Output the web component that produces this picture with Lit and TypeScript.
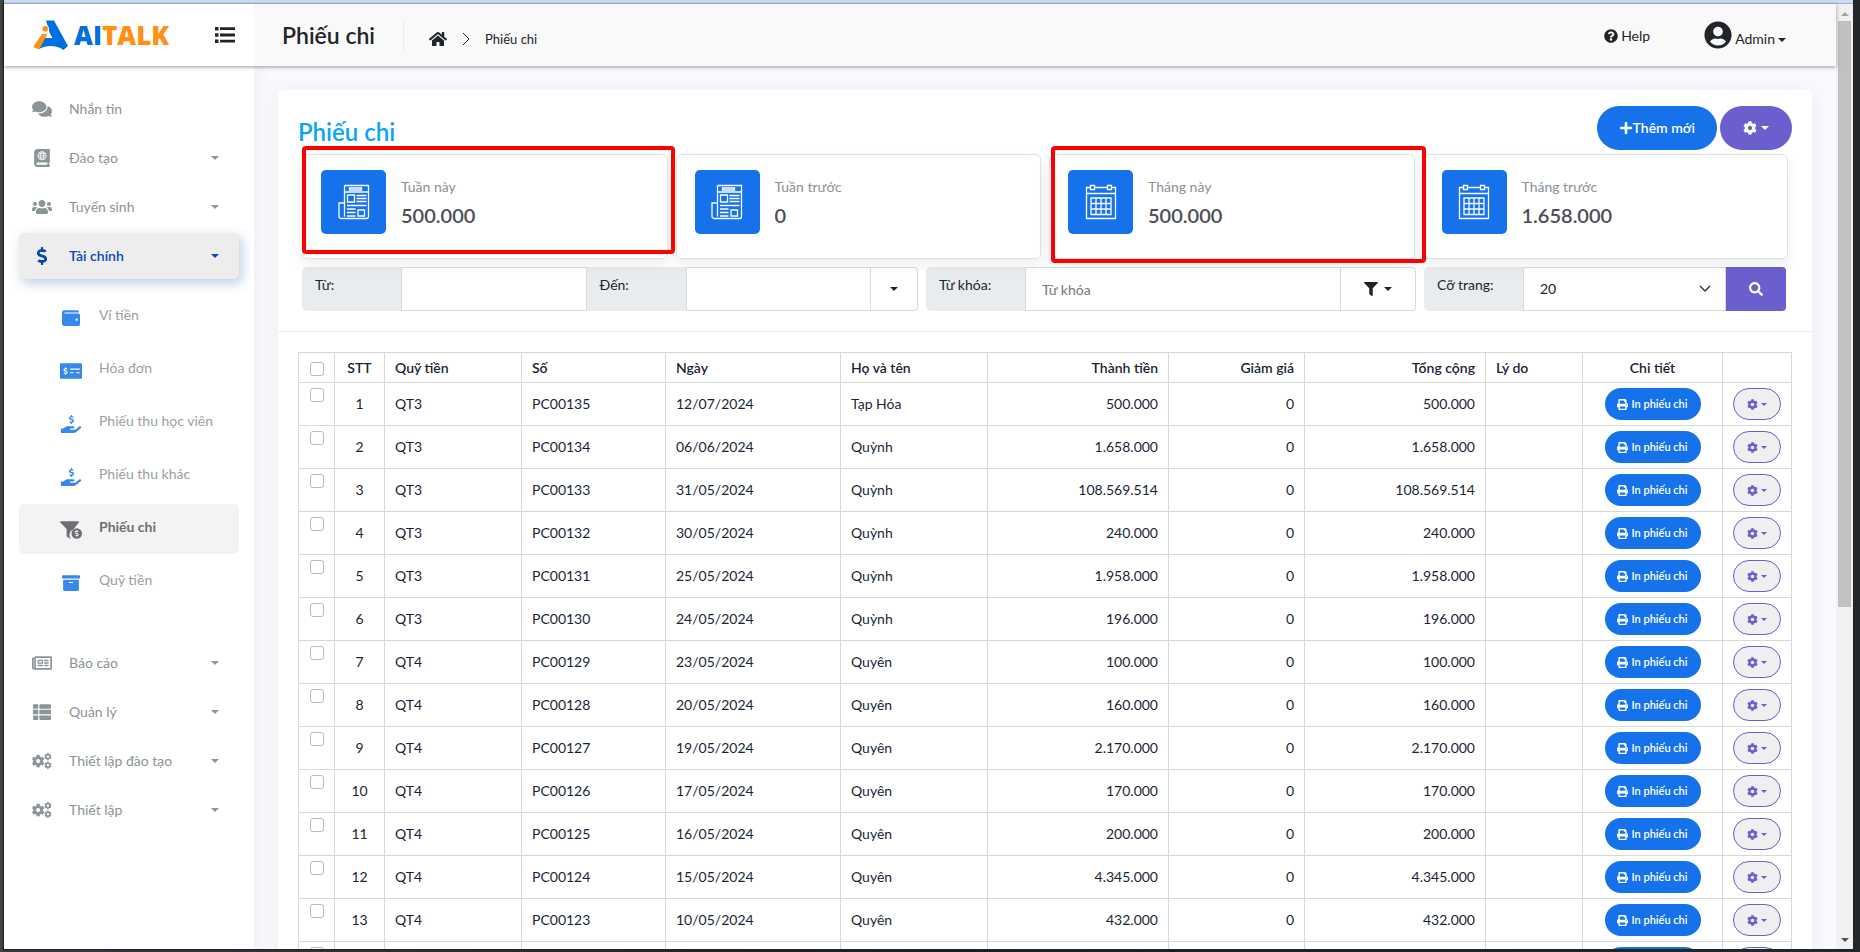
import { LitElement, html, css, svg, nothing } from "lit";
import { customElement, property, state } from "lit/decorators.js";
import { classMap } from "lit/directives/class-map.js";

const DOLLAR =
  "M209.2 233.4l-108-31.6C88.7 198.2 80 186.5 80 173.5c0-16.3 13.2-29.5 29.5-29.5h66.3c12.2 0 24.2 3.7 34.2 10.5 6.1 4.1 14.3 3.1 19.5-2l34.8-34c7.1-6.9 6.1-18.4-1.8-24.5C238 74.8 207.4 64.1 176 64V16c0-8.8-7.2-16-16-16h-32c-8.8 0-16 7.2-16 16v48h-2.5C45.8 64-5.4 118.7.5 183.6c4.2 46.1 39.4 83.6 83.8 96.6l102.5 30c12.5 3.7 21.2 15.3 21.2 28.3 0 16.3-13.2 29.5-29.5 29.5h-66.3C100 368 88 364.3 78 357.5c-6.1-4.1-14.3-3.1-19.5 2l-34.8 34c-7.1 6.9-6.1 18.4 1.8 24.5 24.5 19.2 55.1 29.9 86.5 30v48c0 8.8 7.2 16 16 16h32c8.8 0 16-7.2 16-16v-48.2c46.6-.9 90.3-28.6 105.7-72.7 21.5-61.6-14.6-124.8-72.5-141.7z";
const COG =
  "M487.4 315.7l-42.6-24.6c4.3-23.2 4.3-47 0-70.2l42.6-24.6c4.9-2.8 7.1-8.6 5.5-14-11.1-35.6-30-67.8-54.7-94.6-3.8-4.1-10-5.1-14.8-2.3L380.8 110c-17.9-15.4-38.5-27.3-60.8-35.1V25.8c0-5.6-3.9-10.5-9.4-11.7-36.7-8.2-74.3-7.8-109.2 0-5.5 1.2-9.4 6.1-9.4 11.7V75c-22.2 7.9-42.8 19.8-60.8 35.1L88.7 85.5c-4.9-2.8-11-1.9-14.8 2.3-24.7 26.7-43.6 58.9-54.7 94.6-1.7 5.4.6 11.2 5.5 14L67.3 221c-4.3 23.2-4.3 47 0 70.2l-42.6 24.6c-4.9 2.8-7.1 8.6-5.5 14 11.1 35.6 30 67.8 54.7 94.6 3.8 4.1 10 5.1 14.8 2.3l42.6-24.6c17.9 15.4 38.5 27.3 60.8 35.1v49.2c0 5.6 3.9 10.5 9.4 11.7 36.7 8.2 74.3 7.8 109.2 0 5.5-1.2 9.4-6.1 9.4-11.7v-49.2c22.2-7.9 42.8-19.8 60.8-35.1l42.6 24.6c4.9 2.8 11 1.9 14.8-2.3 24.7-26.7 43.6-58.9 54.7-94.6 1.5-5.5-.7-11.3-5.6-14.1zM256 336c-44.1 0-80-35.9-80-80s35.9-80 80-80 80 35.9 80 80-35.9 80-80 80z";

const ICONS: Record<string, { box: string; body: unknown }> = {
  comments: {
    box: "0 0 576 512",
    body: svg`<path d="M416 192c0-88.4-93.1-160-208-160S0 103.6 0 192c0 34.3 14.1 65.9 38 92-13.4 30.2-35.5 54.2-35.8 54.5-2.2 2.3-2.8 5.7-1.5 8.7S4.8 352 8 352c36.6 0 66.9-12.3 88.7-25 32.2 15.7 70.3 25 111.3 25 114.9 0 208-71.6 208-160zm122 220c23.9-26 38-57.7 38-92 0-66.9-53.5-124.2-129.3-148.1.9 6.6 1.3 13.3 1.3 20.1 0 105.9-107.7 192-240 192-10.8 0-21.3-.8-31.7-1.9C207.8 439.6 281.8 480 368 480c41 0 79.1-9.2 111.3-25 21.8 12.7 52.1 25 88.7 25 3.2 0 6.1-1.9 7.3-4.8 1.3-2.9.7-6.3-1.5-8.7-.3-.3-22.4-24.2-35.8-54.5z"/>`,
  },
  atlas: {
    box: "0 0 448 512",
    body: svg`<path fill-rule="evenodd" d="M96 0h320c17.700 0 32 14 32 32v320c0 12-7 22-16 28-4 15-4 53 0 68 10 4 16 14 16 26 0 22-14 38-32 38H96c-53 0-96-43-96-96V96C0 43 43 0 96 0zm0 384c-42 0-42 64 0 64h280v-64z"/><g fill="none" stroke="#fff" stroke-width="22"><circle cx="226" cy="192" r="114"/><ellipse cx="226" cy="192" rx="50" ry="114"/><path d="M112 192h228M130 130h192M130 254h192"/></g>`,
  },
  users: {
    box: "0 0 640 512",
    body: svg`<path d="M96 224c35.3 0 64-28.7 64-64s-28.7-64-64-64-64 28.7-64 64 28.7 64 64 64zm448 0c35.3 0 64-28.7 64-64s-28.700-64-64-64-64 28.700-64 64 28.700 64 64 64zm32 32h-64c-17.600 0-33.500 7.100-45.100 18.600 40.300 22.100 68.900 62 75.100 109.400h66c17.700 0 32-14.300 32-32v-32c0-35.300-28.700-64-64-64zm-256 0c61.900 0 112-50.100 112-112S381.900 32 320 32 208 82.100 208 144s50.100 112 112 112zm76.800 32h-8.300c-20.800 10-43.900 16-68.500 16s-47.600-6-68.500-16h-8.300C179.600 288 128 339.600 128 403.200V432c0 26.500 21.500 48 48 48h288c26.500 0 48-21.500 48-48v-28.800c0-63.600-51.600-115.200-115.200-115.200zm-223.700-13.400C161.500 263.100 145.600 256 128 256H64c-35.300 0-64 28.700-64 64v32c0 17.700 14.300 32 32 32h65.900c6.300-47.400 34.900-87.300 75.200-109.400z"/>`,
  },
  dollar: { box: "0 0 288 512", body: svg`<path d=${DOLLAR} />` },
  news: {
    box: "0 0 576 512",
    body: svg`<path d="M552 64H112c-20.858 0-38.643 13.377-45.248 32H24c-13.255 0-24 10.745-24 24v272c0 30.928 25.072 56 56 56h496c13.255 0 24-10.745 24-24V88c0-13.255-10.745-24-24-24zM48 392V144h16v248c0 4.411-3.589 8-8 8s-8-3.589-8-8zm480 8H111.422c.374-2.614.578-5.283.578-8V112h416v288zM172 280h136c6.627 0 12-5.373 12-12v-96c0-6.627-5.373-12-12-12H172c-6.627 0-12 5.373-12 12v96c0 6.627 5.373 12 12 12zm28-80h80v40h-80v-40zm-40 140v-24c0-6.627 5.373-12 12-12h136c6.627 0 12 5.373 12 12v24c0 6.627-5.373 12-12 12H172c-6.627 0-12-5.373-12-12zm192 0v-24c0-6.627 5.373-12 12-12h104c6.627 0 12 5.373 12 12v24c0 6.627-5.373 12-12 12H364c-6.627 0-12-5.373-12-12zm0-144v-24c0-6.627 5.373-12 12-12h104c6.627 0 12 5.373 12 12v24c0 6.627-5.373 12-12 12H364c-6.627 0-12-5.373-12-12zm0 72v-24c0-6.627 5.373-12 12-12h104c6.627 0 12 5.373 12 12v24c0 6.627-5.373 12-12 12H364c-6.627 0-12-5.373-12-12z"/>`,
  },
  list: {
    box: "0 0 512 512",
    body: svg`<rect x="0" y="32" width="149" height="128" rx="24"/><rect x="181" y="32" width="331" height="128" rx="24"/><rect x="0" y="192" width="149" height="128" rx="24"/><rect x="181" y="192" width="331" height="128" rx="24"/><rect x="0" y="352" width="149" height="128" rx="24"/><rect x="181" y="352" width="331" height="128" rx="24"/>`,
  },
  cogs: {
    box: "0 0 640 512",
    body: svg`<path transform="translate(-14 50) scale(.82)" d=${COG} /><path transform="translate(388 -2) scale(.47)" d=${COG} /><path transform="translate(388 272) scale(.47)" d=${COG} />`,
  },
  cog: { box: "0 0 512 512", body: svg`<path d=${COG} />` },
  wallet: {
    box: "0 0 512 512",
    body: svg`<path d="M461.2 128H80c-8.840 0-16-7.160-16-16s7.160-16 16-16h384c8.840 0 16-7.160 16-16 0-26.510-21.490-48-48-48H64C28.650 32 0 60.650 0 96v320c0 35.350 28.650 64 64 64h397.200c28.020 0 50.800-21.530 50.800-48V176c0-26.470-22.780-48-50.800-48zM416 336c-17.670 0-32-14.330-32-32s14.330-32 32-32 32 14.330 32 32-14.330 32-32 32z"/>`,
  },
  check: {
    box: "0 0 640 512",
    body: svg`<rect x="0" y="32" width="640" height="448" rx="24"/><g fill="#fff"><path transform="translate(102 150) scale(.42)" d=${DOLLAR} /><rect x="290" y="186" width="290" height="32" rx="12"/><rect x="290" y="290" width="110" height="32" rx="12"/><rect x="470" y="290" width="110" height="32" rx="12"/></g>`,
  },
  hand: {
    box: "0 0 576 512",
    body: svg`<path d="M565.3 328.100c-11.800-10.700-30.200-10-42.600 0L430.300 402c-11.300 9.100-25.400 14-40 14H272c-8.800 0-16-7.200-16-16s7.200-16 16-16h78.300c15.900 0 30.700-10.900 33.300-26.600 3.300-20-12.100-37.400-31.600-37.400H192c-27 0-53.100 9.300-74.100 26.300L71.400 384H16c-8.800 0-16 7.200-16 16v96c0 8.800 7.200 16 16 16h356.800c14.500 0 28.600-4.900 40-14L564 377c15.200-12.100 16.400-35.300 1.300-48.900z"/><path transform="translate(230 0) scale(.5)" d=${DOLLAR} />`,
  },
  funnel: {
    box: "0 0 640 512",
    body: svg`<path d="M528 0H24C3 0-8 26 7 41l185 185v206c0 8 4 15 10 20l98 58c6 2 12 2 17 0-30-36-46-80-40-130 6-70 50-120 110-138L545 41c15-15 4-41-17-41z"/><circle cx="488" cy="356" r="152"/><path fill="#f3f3f3" transform="translate(432 256) scale(.39)" d=${DOLLAR} />`,
  },
  archive: {
    box: "0 0 512 512",
    body: svg`<path d="M32 448c0 17.700 14.300 32 32 32h384c17.700 0 32-14.300 32-32V160H32v288zm160-212c0-6.600 5.400-12 12-12h104c6.600 0 12 5.400 12 12v8c0 6.600-5.400 12-12 12H204c-6.600 0-12-5.400-12-12v-8zM480 32H32C14.300 32 0 46.300 0 64v48c0 8.800 7.200 16 16 16h480c8.800 0 16-7.200 16-16V64c0-17.700-14.300-32-32-32z"/>`,
  },
  home: {
    box: "0 0 576 512",
    body: svg`<path d="M280.370 148.260L96 300.110V464a16 16 0 0 0 16 16l112.060-.290a16 16 0 0 0 15.920-16V368a16 16 0 0 1 16-16h64a16 16 0 0 1 16 16v95.640a16 16 0 0 0 16 16.050L464 480a16 16 0 0 0 16-16V300L295.670 148.260a12.190 12.190 0 0 0-15.300 0zM571.600 251.470L488 182.560V44.050a12 12 0 0 0-12-12h-56a12 12 0 0 0-12 12v72.610L318.470 43a48 48 0 0 0-61 0L4.340 251.470a12 12 0 0 0-1.600 16.900l25.500 31A12 12 0 0 0 45.150 301l235.220-193.740a12.190 12.190 0 0 1 15.300 0L530.900 301a12 12 0 0 0 16.900-1.600l25.500-31a12 12 0 0 0-1.700-16.930z"/>`,
  },
  help: {
    box: "0 0 512 512",
    body: svg`<path d="M504 256c0 136.997-111.043 248-248 248S8 392.997 8 256C8 119.083 119.043 8 256 8s248 111.083 248 248zM262.655 90c-54.497 0-89.255 22.957-116.549 63.758-3.536 5.286-2.353 12.415 2.715 16.258l34.699 26.310c5.205 3.947 12.621 3.008 16.665-2.122 17.864-22.658 30.113-35.797 57.303-35.797 20.429 0 45.698 13.148 45.698 32.958 0 14.976-12.363 22.667-32.534 33.976C247.128 238.528 216 254.941 216 296v4c0 6.627 5.373 12 12 12h56c6.627 0 12-5.373 12-12v-1.333c0-28.462 83.186-29.647 83.186-106.667 0-58.002-60.165-102-116.531-102zM256 338c-25.365 0-46 20.635-46 46 0 25.364 20.635 46 46 46s46-20.636 46-46c0-25.365-20.635-46-46-46z"/>`,
  },
  user: {
    box: "0 0 496 512",
    body: svg`<path d="M248 8C111 8 0 119 0 256s111 248 248 248 248-111 248-248S385 8 248 8zm0 96c48.600 0 88 39.400 88 88s-39.400 88-88 88-88-39.400-88-88 39.400-88 88-88zm0 344c-58.700 0-111.300-26.600-146.500-68.200 18.800-35.400 55.600-59.800 98.500-59.800 2.400 0 4.800.4 7.100 1.100 13 4.200 26.600 6.900 40.900 6.900 14.300 0 28-2.700 40.900-6.900 2.300-.7 4.700-1.100 7.100-1.100 42.900 0 79.700 24.400 98.500 59.800C359.300 421.400 306.700 448 248 448z"/>`,
  },
  plus: {
    box: "0 0 448 512",
    body: svg`<path d="M416 208H272V64c0-17.670-14.330-32-32-32h-32c-17.670 0-32 14.330-32 32v144H32c-17.670 0-32 14.330-32 32v32c0 17.670 14.330 32 32 32h144v144c0 17.670 14.330 32 32 32h32c17.670 0 32-14.330 32-32V304h144c17.670 0 32-14.330 32-32v-32c0-17.670-14.330-32-32-32z"/>`,
  },
  filter: {
    box: "0 0 512 512",
    body: svg`<path d="M487.976 0H24.028C2.710 0-8.047 25.866 7.058 40.971L192 225.941V432c0 7.831 3.821 15.170 10.237 19.662l80 55.980C298.020 518.690 320 507.493 320 487.980V225.941l184.947-184.970C520.021 25.896 509.338 0 487.976 0z"/>`,
  },
  search: {
    box: "0 0 512 512",
    body: svg`<path d="M505 442.700L405.300 343c-4.500-4.500-10.600-7-17-7H372c27.600-35.300 44-79.700 44-128C416 93.100 322.900 0 208 0S0 93.100 0 208s93.100 208 208 208c48.300 0 92.700-16.400 128-44v16.300c0 6.400 2.500 12.500 7 17l99.700 99.700c9.400 9.400 24.600 9.400 33.900 0l28.300-28.300c9.400-9.400 9.400-24.600.1-34zM208 336c-70.700 0-128-57.200-128-128 0-70.700 57.200-128 128-128 70.700 0 128 57.200 128 128 0 70.700-57.200 128-128 128z"/>`,
  },
  print: {
    box: "0 0 512 512",
    body: svg`<path d="M448 192V77.250c0-8.490-3.370-16.620-9.370-22.630L393.370 9.370c-6-6-14.140-9.370-22.630-9.370H96C78.330 0 64 14.330 64 32v160c-35.350 0-64 28.650-64 64v112c0 8.840 7.160 16 16 16h48v96c0 17.670 14.330 32 32 32h320c17.670 0 32-14.330 32-32v-96h48c8.840 0 16-7.160 16-16V256c0-35.350-28.650-64-64-64zm-64 256H128v-96h256v96zm0-224H128V64h192v48c0 8.840 7.160 16 16 16h48v96zm48 72c-13.250 0-24-10.750-24-24 0-13.260 10.750-24 24-24s24 10.740 24 24c0 13.250-10.750 24-24 24z"/>`,
  },
  menu: {
    box: "0 0 20 18",
    body: svg`<path d="M0 1h3.500v3.500H0zM0 7.200h3.500v3.500H0zM0 13.400h3.500v3.500H0zM5 1.200h15v2.800H5zM5 7.600h15v2.800H5zM5 13.800h15v2.800H5z"/>`,
  },
  chevron: {
    box: "0 0 8 14",
    body: svg`<path fill="none" stroke="currentColor" d="M1 1l6 6-6 6"/>`,
  },
  paper: {
    box: "0 0 32 36",
    body: svg`<g fill="none" stroke="currentColor" stroke-width="1.300"><path d="M6.500 1.500h24v31a2 2 0 0 1-2 2H3a2 2 0 0 1-2-2V19h5.500v13.500M6.500 1.500V19M6.500 8h24M11.500 4h12v2h-12zM9.500 11h7v7h-7zM20 26h6.500v6H20zM18.500 11.500h10M18.500 14.500h10M18.500 17.500h10M9 21.500h19.500M9 25h8.500M9 28.500h8.500M9 32h8.500"/></g>`,
  },
  calendar: {
    box: "0 0 32 36",
    body: svg`<g fill="none" stroke="currentColor" stroke-width="1.300"><path d="M5.500 3.500h-4v31h29v-31h-4M9.500 3.500h13M1.500 9.500h29M5.500 1.500h4v4h-4zM22.500 1.500h4v4h-4zM6 14h20v16.500H6zM6 19.500h20M6 25h20M11 14v16.500M16 14v16.500M21 14v16.500"/></g>`,
  },
};

@customElement("ui-icon")
class UiIcon extends LitElement {
  @property() name = "";
  static styles = css`
    :host {
      display: inline-flex;
      flex: none;
    }
    svg {
      width: 100%;
      height: 100%;
      fill: currentColor;
    }
  `;
  render() {
    const icon = ICONS[this.name];
    return icon
      ? html`<svg viewBox=${icon.box} aria-hidden="true">${icon.body}</svg>`
      : nothing;
  }
}

const ROWS: string[][] = [
  ["QT3", "PC00135", "12/07/2024", "Tạp Hóa", "500.000"],
  ["QT3", "PC00134", "06/06/2024", "Quỳnh", "1.658.000"],
  ["QT3", "PC00133", "31/05/2024", "Quỳnh", "108.569.514"],
  ["QT3", "PC00132", "30/05/2024", "Quỳnh", "240.000"],
  ["QT3", "PC00131", "25/05/2024", "Quỳnh", "1.958.000"],
  ["QT3", "PC00130", "24/05/2024", "Quỳnh", "196.000"],
  ["QT4", "PC00129", "23/05/2024", "Quyên", "100.000"],
  ["QT4", "PC00128", "20/05/2024", "Quyên", "160.000"],
  ["QT4", "PC00127", "19/05/2024", "Quyên", "2.170.000"],
  ["QT4", "PC00126", "17/05/2024", "Quyên", "170.000"],
  ["QT4", "PC00125", "16/05/2024", "Quyên", "200.000"],
  ["QT4", "PC00124", "15/05/2024", "Quyên", "4.345.000"],
  ["QT4", "PC00123", "10/05/2024", "Quyên", "432.000"],
  ["", "", "", "", ""],
];

const COLUMNS: { label: string; width: number; align: string }[] = [
  { label: "Quỹ tiền", width: 137, align: "left" },
  { label: "Số", width: 144, align: "left" },
  { label: "Ngày", width: 175, align: "left" },
  { label: "Họ và tên", width: 147, align: "left" },
  { label: "Thành tiền", width: 181, align: "right" },
  { label: "Giảm giá", width: 136, align: "right" },
  { label: "Tổng cộng", width: 181, align: "right" },
  { label: "Lý do", width: 97, align: "left" },
  { label: "Chi tiết", width: 140, align: "center" },
  { label: "", width: 69, align: "center" },
];

@customElement("app-root")
class AppRoot extends LitElement {
  @state() private openGroup = "Tài chính";

  static styles = css`
    :host {
      display: block;
      font-family: Lato, "Noto Sans", sans-serif;
      font-size: 14px;
      line-height: 20px;
      color: #212529;
    }
    * {
      box-sizing: border-box;
    }
    a {
      color: inherit;
      text-decoration: none;
    }
    button,
    input,
    select {
      font: inherit;
      color: inherit;
      margin: 0;
    }
    button {
      cursor: pointer;
    }
    h1,
    h2,
    p {
      margin: 0;
    }
    .desktop {
      height: 100vh;
      padding: 0 7px 3px 4px;
      background: linear-gradient(90deg, #4a4743, #3a3a3c 4px, #1b1e20 50%, #24282a);
      overflow: hidden;
    }
    .window {
      height: 100%;
      display: flex;
      border-top: 3px solid #c9dbf6;
      box-shadow: 0 0 0 1px #222;
    }
    .page {
      flex: 1;
      min-width: 0;
      display: grid;
      grid-template: 62px minmax(0, 1fr) / 250px minmax(0, 1fr);
      border-top: 1px solid #9fb3d1;
      background: #f9fafd;
    }
    .caret {
      flex: none;
      border: 4px solid transparent;
      border-top-color: currentColor;
      border-bottom: 0;
    }

    .topbar {
      grid-column: 1 / 3;
      display: flex;
      background: #f9f9f9;
      box-shadow: 0 1px 4px rgba(0, 0, 0, 0.4);
      z-index: 2;
    }
    .brand {
      width: 250px;
      display: flex;
      align-items: center;
      justify-content: space-between;
      padding: 0 19px 0 28px;
      background: #fff;
    }
    .logo {
      display: flex;
      align-items: center;
      gap: 6px;
      font: 800 26px/32px "Open Sans", sans-serif;
      color: #0070e0;
    }
    .logo svg {
      width: 36px;
      height: 30px;
    }
    .logo .warm {
      color: #ff9012;
    }
    .toggle {
      display: flex;
      padding: 0;
      border: 0;
      background: none;
    }
    .toggle ui-icon {
      width: 20px;
      height: 18px;
    }
    .heading {
      flex: 1;
      display: flex;
      align-items: center;
      padding: 0 50px 0 28px;
    }
    .heading h1 {
      font-size: 23px;
      line-height: 32px;
      font-weight: 600;
      padding: 0 28px 0 0;
      border-right: 1px solid #ececec;
    }
    .crumbs {
      display: flex;
      align-items: center;
      gap: 15px;
      padding: 8px 0 0 25px;
      font-size: 13px;
    }
    .crumbs a {
      display: flex;
    }
    .crumbs ui-icon {
      width: 18px;
      height: 16px;
    }
    .crumbs ui-icon.sep {
      width: 8px;
      height: 14px;
    }
    .account {
      margin-left: auto;
      display: flex;
      align-items: center;
      gap: 54px;
    }
    .account a,
    .account button {
      display: flex;
      align-items: center;
      gap: 3px;
      padding: 0;
      border: 0;
      background: none;
    }
    .account a {
      padding-top: 2px;
    }
    .account a ui-icon {
      width: 14px;
      height: 14px;
    }
    .account button {
      align-items: flex-end;
    }
    .account button ui-icon {
      width: 28px;
      height: 28px;
    }
    .account .caret {
      margin: 0 0 7px;
    }

    .sidebar {
      padding: 20px 15px;
      background: #fff;
      box-shadow: 2px 0 16px rgba(40, 60, 120, 0.07);
      z-index: 1;
      color: #8b9497;
      overflow: hidden;
    }
    .sidebar ul {
      list-style: none;
      margin: 0;
      padding: 0;
      display: grid;
      gap: 3px;
    }
    .group {
      width: 100%;
      height: 46px;
      display: grid;
      grid-template-columns: 20px 1fr 8px;
      align-items: center;
      gap: 17px;
      padding: 0 20px 0 13px;
      border: 0;
      border-radius: 5px;
      background: none;
      text-align: left;
    }
    .group ui-icon {
      width: 20px;
      height: 18px;
    }
    .group.open {
      background: #ededed;
      color: #0648b3;
      font-weight: 600;
      box-shadow: 3px 4px 12px rgba(6, 72, 179, 0.28);
    }
    .sidebar .sub {
      padding: 13px 0 30px;
    }
    .sub a {
      height: 50px;
      display: grid;
      grid-template-columns: 22px 1fr;
      align-items: center;
      gap: 17px;
      padding: 0 12px 5px 41px;
      border-radius: 5px;
      color: #9b9fa2;
    }
    .sub ui-icon {
      width: 22px;
      height: 18px;
      color: #3688ec;
      margin-top: 6px;
    }
    .sub a.current {
      background: #f3f3f3;
      color: #6d6f75;
      font-weight: 700;
    }
    .sub a.current ui-icon {
      color: #6d6f75;
    }

    main {
      padding: 24px 24px 0;
      overflow: hidden;
    }
    .panel {
      background: #fff;
      border-radius: 5px;
      box-shadow: 0 2px 20px rgba(40, 60, 120, 0.08);
      padding-top: 16px;
    }
    .title-row {
      display: flex;
      align-items: flex-end;
      gap: 3px;
      padding: 0 20px;
    }
    .title-row h2 {
      flex: 1;
      font-size: 24px;
      line-height: 36px;
      font-weight: 600;
      color: #0aa5f7;
    }
    .pill {
      display: flex;
      align-items: center;
      justify-content: center;
      height: 44px;
      border: 0;
      border-radius: 22px;
      background: #1672eb;
      color: #fff;
      font-weight: 600;
    }
    .pill ui-icon {
      width: 14px;
      height: 14px;
    }
    .pill.add {
      padding: 0 22px;
    }
    .pill.tools {
      width: 72px;
      gap: 4px;
      background: #6a5fcd;
    }
    .stats {
      display: grid;
      grid-template-columns: repeat(4, 1fr);
      gap: 8px;
      padding: 4px 24px 8px;
    }
    .stat {
      position: relative;
      display: flex;
      gap: 15px;
      padding: 15px 18px 24px;
      border: 1px solid #dfe0e6;
      border-radius: 5px;
      box-shadow: 0 6px 14px rgba(0, 0, 0, 0.07);
    }
    .tile {
      width: 65px;
      height: 64px;
      display: grid;
      place-items: center;
      border-radius: 5px;
      background: #1672eb;
      color: #fff;
    }
    .tile ui-icon {
      width: 32px;
      height: 36px;
    }
    .stat p {
      padding-top: 7px;
      color: #8b9094;
    }
    .stat strong {
      display: block;
      padding-top: 4px;
      font-size: 20px;
      line-height: 28px;
      font-weight: 600;
      color: #4c4e55;
    }
    .mark {
      position: absolute;
      z-index: 1;
      border: 4px solid #f00;
      border-radius: 4px;
      pointer-events: none;
    }
    .mark.week {
      inset: -9px -8px 4px -1px;
    }
    .mark.month {
      inset: -9px -12px -5px 1px;
    }
    .filters {
      display: grid;
      grid-template-columns: minmax(0, 616fr) minmax(0, 490fr) minmax(0, 362fr);
      gap: 8px;
      padding: 0 26px 20px 24px;
      border-bottom: 1px solid #e9ebee;
    }
    .bar {
      display: flex;
      height: 44px;
    }
    .bar label {
      flex: none;
      width: 99px;
      padding: 8px 13px;
      background: #e8ecef;
    }
    .bar label:first-child {
      border-radius: 5px 0 0 5px;
    }
    .bar input,
    .bar select {
      flex: 1;
      min-width: 0;
      width: 0;
      height: 44px;
      padding: 0 16px;
      border: 1px solid #d9dbe1;
      border-radius: 0;
      background-color: #fff;
      outline: 0;
    }
    .bar input::placeholder {
      color: #73777b;
      opacity: 1;
    }
    .bar select {
      appearance: none;
      background-image: url("data:image/svg+xml,%3Csvg xmlns='http://www.w3.org/2000/svg' viewBox='0 0 12 8'%3E%3Cpath fill='none' stroke='%23343a40' stroke-width='1.500' d='M1 1l5 5 5-5'/%3E%3C/svg%3E");
      background-repeat: no-repeat;
      background-size: 12px 8px;
      background-position: right 14px center;
    }
    .bar button {
      flex: none;
      display: flex;
      align-items: center;
      justify-content: center;
      gap: 6px;
      height: 44px;
      padding: 0;
      border: 1px solid #d9dbe1;
      border-left: 0;
      border-radius: 0 4px 4px 0;
      background: #fff;
    }
    .bar button ui-icon {
      width: 14px;
      height: 14px;
    }
    .bar .dates {
      width: 47px;
    }
    .bar .match {
      width: 75px;
    }
    .bar .find {
      width: 60px;
      border: 0;
      background: #6a5fcd;
      color: #fff;
    }

    .sheet {
      padding: 20px;
    }
    table {
      width: 100%;
      table-layout: fixed;
      border-collapse: collapse;
      color: #1a1f36;
    }
    th,
    td {
      border: 1px solid #d6d8da;
      padding: 0 10px;
      height: 43px;
      text-align: left;
      white-space: nowrap;
    }
    th {
      height: 30px;
      font-weight: 600;
    }
    th.right,
    td.right {
      text-align: right;
    }
    th.center,
    td.center {
      text-align: center;
      padding: 0;
    }
    th.pick {
      padding-top: 2px;
    }
    td.pick {
      padding: 5px 0 0;
      vertical-align: top;
    }
    .pick input {
      appearance: none;
      display: block;
      width: 14px;
      height: 14px;
      margin: 0 auto;
      border: 1px solid #b9bbbe;
      border-radius: 3px;
      background: #fff;
    }
    .pick input:checked {
      background: #1672eb;
    }
    td button {
      display: flex;
      align-items: center;
      justify-content: center;
      gap: 3px;
      width: 96px;
      height: 32px;
      margin: 0 auto;
      padding: 0;
      border: 0;
      border-radius: 16px;
      background: #1672eb;
      color: #fff;
      font-size: 11px;
      font-weight: 600;
    }
    td button.more {
      width: 48px;
      border: 1px solid #6a5fcd;
      background: #efefef;
      color: #6a5fcd;
    }
    td button ui-icon {
      width: 11px;
      height: 11px;
    }
    .more .caret {
      border-width: 3px 3px 0;
    }

    .scrollbar {
      width: 17px;
      display: flex;
      flex-direction: column;
      align-items: center;
      padding: 8px 0 7px;
      border-top: 1px solid #9fb3d1;
      background: #f1f1f1;
    }
    .thumb {
      width: 13px;
      height: 63%;
      margin-top: 5px;
      background: #c1c1c1;
    }
    .scrollbar .arrow-up {
      border: 4px solid transparent;
      border-top: 0;
      border-bottom-color: #a3a3a3;
    }
    .scrollbar .arrow-down {
      margin-top: auto;
      color: #505050;
    }
  `;

  private toggle(name: string) {
    this.openGroup = this.openGroup === name ? "" : name;
  }

  private group(icon: string, label: string, children = true) {
    return html`<button
      class=${classMap({ group: true, open: this.openGroup === label })}
      @click=${() => this.toggle(label)}
    >
      <ui-icon name=${icon}></ui-icon>
      <span>${label}</span>
      ${children ? html`<span class="caret"></span>` : nothing}
    </button>`;
  }

  private link(icon: string, label: string, current = false) {
    return html`<li>
      <a href="#" class=${classMap({ current })}>
        <ui-icon name=${icon}></ui-icon><span>${label}</span>
      </a>
    </li>`;
  }

  private stat(icon: string, label: string, value: string, mark = "") {
    return html`<article class="stat">
      <div class="tile"><ui-icon name=${icon}></ui-icon></div>
      <div>
        <p>${label}</p>
        <strong>${value}</strong>
      </div>
      ${mark ? html`<div class="mark ${mark}"></div>` : nothing}
    </article>`;
  }

  private row(r: string[], i: number) {
    const loaded = r[1] !== "";
    return html`<tr>
      <td class="pick"><input type="checkbox" aria-label="Phiếu ${r[1]}" /></td>
      <td class="center">${loaded ? i + 1 : nothing}</td>
      <td>${r[0]}</td>
      <td>${r[1]}</td>
      <td>${r[2]}</td>
      <td>${r[3]}</td>
      <td class="right">${r[4]}</td>
      <td class="right">${loaded ? "0" : nothing}</td>
      <td class="right">${r[4]}</td>
      <td></td>
      <td class="center">
        <button aria-label="In phiếu chi">
          ${loaded ? html`<ui-icon name="print"></ui-icon>In phiếu chi` : nothing}
        </button>
      </td>
      <td class="center">
        <button class="more" aria-label="Thao tác">
          <ui-icon name="cog"></ui-icon><span class="caret"></span>
        </button>
      </td>
    </tr>`;
  }

  render() {
    return html`<div class="desktop">
      <div class="window">
        <div class="page">
          <header class="topbar">
            <div class="brand">
              <a class="logo" href="#">
                <svg viewBox="0 0 36 30" aria-hidden="true">
                  <path fill="#0070e0" d="M14 .5h8L36 26l-4.500 4C25 25 14 25 7 29l5-11h8.500l-3-5.500z" />
                  <circle cx="13.200" cy="8.800" r="3.400" fill="#ff9012" stroke="#fff" />
                  <path fill="#ff9012" d="M10.500 13.500c2 1 4 .8 5.300 0L7 29.500l-6-2.500z" />
                </svg>
                <span>AI<span class="warm">TALK</span></span>
              </a>
              <button class="toggle" aria-label="Menu"><ui-icon name="menu"></ui-icon></button>
            </div>
            <div class="heading">
              <h1>Phiếu chi</h1>
              <nav class="crumbs">
                <a href="#" aria-label="Trang chủ"><ui-icon name="home"></ui-icon></a>
                <ui-icon class="sep" name="chevron"></ui-icon>
                <span>Phiếu chi</span>
              </nav>
              <div class="account">
                <a href="#"><ui-icon name="help"></ui-icon>Help</a>
                <button>
                  <ui-icon name="user"></ui-icon><span>Admin</span><span class="caret"></span>
                </button>
              </div>
            </div>
          </header>

          <nav class="sidebar">
            <ul>
              <li>${this.group("comments", "Nhắn tin", false)}</li>
              <li>${this.group("atlas", "Đào tạo")}</li>
              <li>${this.group("users", "Tuyển sinh")}</li>
              <li>
                ${this.group("dollar", "Tài chính")}
                ${this.openGroup === "Tài chính"
                  ? html`<ul class="sub">
                      ${this.link("wallet", "Ví tiền")} ${this.link("check", "Hóa đơn")}
                      ${this.link("hand", "Phiếu thu học viên")}
                      ${this.link("hand", "Phiếu thu khác")}
                      ${this.link("funnel", "Phiếu chi", true)}
                      ${this.link("archive", "Quỹ tiền")}
                    </ul>`
                  : nothing}
              </li>
              <li>${this.group("news", "Báo cáo")}</li>
              <li>${this.group("list", "Quản lý")}</li>
              <li>${this.group("cogs", "Thiết lập đào tạo")}</li>
              <li>${this.group("cogs", "Thiết lập")}</li>
            </ul>
          </nav>

          <main>
            <section class="panel">
              <div class="title-row">
                <h2>Phiếu chi</h2>
                <button class="pill add"><ui-icon name="plus"></ui-icon>Thêm mới</button>
                <button class="pill tools" aria-label="Công cụ">
                  <ui-icon name="cog"></ui-icon><span class="caret"></span>
                </button>
              </div>
              <div class="stats">
                ${this.stat("paper", "Tuần này", "500.000", "week")}
                ${this.stat("paper", "Tuần trước", "0")}
                ${this.stat("calendar", "Tháng này", "500.000", "month")}
                ${this.stat("calendar", "Tháng trước", "1.658.000")}
              </div>
              <form class="filters" @submit=${(e: Event) => e.preventDefault()}>
                <div class="bar">
                  <label for="from">Từ:</label><input id="from" type="text" />
                  <label for="to">Đến:</label><input id="to" type="text" />
                  <button type="button" class="dates" aria-label="Khoảng ngày">
                    <span class="caret"></span>
                  </button>
                </div>
                <div class="bar">
                  <label for="key">Từ khóa:</label>
                  <input id="key" type="text" placeholder="Từ khóa" />
                  <button type="button" class="match" aria-label="Bộ lọc">
                    <ui-icon name="filter"></ui-icon><span class="caret"></span>
                  </button>
                </div>
                <div class="bar">
                  <label for="size">Cỡ trang:</label>
                  <select id="size">
                    <option>20</option>
                    <option>50</option>
                    <option>100</option>
                  </select>
                  <button class="find" aria-label="Tìm"><ui-icon name="search"></ui-icon></button>
                </div>
              </form>
              <div class="sheet">
                <table>
                  <colgroup>
                    <col width="36" />
                    <col width="50" />
                    ${COLUMNS.map((c) => html`<col width=${c.width} />`)}
                  </colgroup>
                  <thead>
                    <tr>
                      <th class="center pick">
                        <input type="checkbox" aria-label="Chọn tất cả" />
                      </th>
                      <th class="center">STT</th>
                      ${COLUMNS.map((c) => html`<th class=${c.align}>${c.label}</th>`)}
                    </tr>
                  </thead>
                  <tbody>
                    ${ROWS.map((r, i) => this.row(r, i))}
                  </tbody>
                </table>
              </div>
            </section>
          </main>
        </div>
        <div class="scrollbar" aria-hidden="true">
          <span class="arrow-up"></span>
          <div class="thumb"></div>
          <span class="caret arrow-down"></span>
        </div>
      </div>
    </div>`;
  }
}
